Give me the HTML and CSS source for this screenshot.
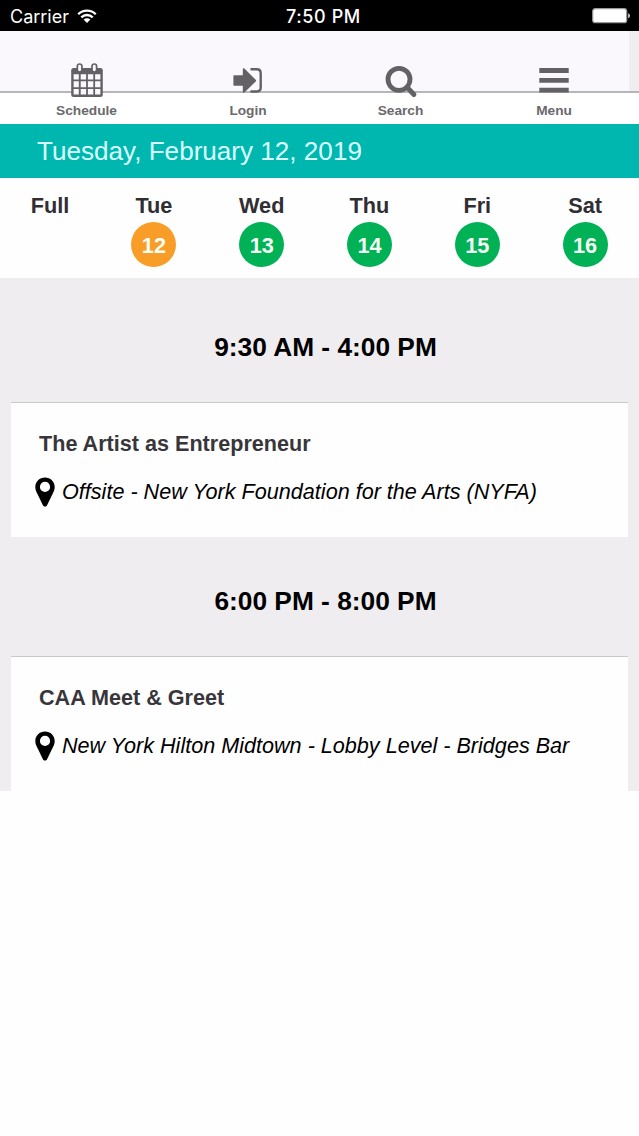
FILE: index.html
```html
<!DOCTYPE html>
<html lang="en">
<head>
  <meta charset="utf-8">
  <title>Schedule</title>
  <link rel="stylesheet" href="styles.css">
</head>
<body>
  <div class="status-bar">
    <div class="carrier">
      <span>Carrier</span>
      <svg class="wifi" width="20" height="14" viewBox="0 0 20 14">
        <path d="M1.2 5.2a12.6 12.6 0 0 1 17.6 0M4.3 8.3a8.2 8.2 0 0 1 11.4 0" fill="none" stroke="#fff" stroke-width="2.3"/>
        <path d="M10 14L6.6 10.6a4.9 4.9 0 0 1 6.8 0z" fill="#fff"/>
      </svg>
    </div>
    <div class="clock">7:50 PM</div>
    <svg class="battery" width="40" height="16" viewBox="0 0 40 16">
      <rect x=".7" y=".7" width="34" height="14" rx="2.5" fill="#fff" stroke="#999" stroke-width="1.2"/>
      <path d="M36.3 5.3c2 .8 2 4.2 0 5z" fill="#fff"/>
    </svg>
  </div>

  <nav class="tabs">
    <a class="tab">
      <svg width="34" height="36" viewBox="0 0 34 36">
        <rect x="1.2" y="6" width="31.6" height="29" rx="2.5" fill="#636164"/>
        <path d="M3.6 12.3h5.2v5.2H3.6zm7.1 0h5.4v5.2h-5.4zm7.2 0h5.4v5.2h-5.4zm7.2 0h5.3v5.2h-5.3zM3.6 19.2h5.2v6H3.6zm7.1 0h5.4v6h-5.4zm7.2 0h5.4v6h-5.4zm7.2 0h5.3v6h-5.3zM3.6 26.9h5.2v5.6H3.6zm7.1 0h5.4v5.6h-5.4zm7.2 0h5.4v5.6h-5.4zm7.2 0h5.3v5.6h-5.3z" fill="#faf8fc"/>
        <rect x="7.3" y="2" width="4.6" height="8" rx="2.3" fill="#faf8fc" stroke="#636164" stroke-width="1.7"/>
        <rect x="22" y="2" width="4.6" height="8" rx="2.3" fill="#faf8fc" stroke="#636164" stroke-width="1.7"/>
      </svg>
      <span>Schedule</span>
    </a>
    <a class="tab">
      <svg width="34" height="36" viewBox="0 0 34 36">
        <path d="M3.4 13.2h8.400V7.200c0-1 .9-1.300 1.600-.6l11.300 11.100c.6.6.6 1.200 0 1.800L13.400 30.400c-.7.7-1.600.4-1.600-.6v-6H3.400c-.6 0-1-.4-1-1v-8.600c0-.6.4-1 1-1z" fill="#636164"/>
        <path d="M19.500 7.300h6.300c2.600 0 3.900 1.300 3.900 3.900v14.400c0 2.600-1.300 3.900-3.900 3.900h-6.300" fill="none" stroke="#636164" stroke-width="2.400"/>
      </svg>
      <span>Login</span>
    </a>
    <a class="tab">
      <svg width="34" height="36" viewBox="0 0 34 36">
        <circle cx="15" cy="17.300" r="11" fill="none" stroke="#636164" stroke-width="4.800"/>
        <path d="M23.500 25.800l6.400 6.600" stroke="#636164" stroke-width="5" stroke-linecap="round"/>
      </svg>
      <span>Search</span>
    </a>
    <a class="tab">
      <svg width="34" height="36" viewBox="0 0 34 36">
        <path d="M2.300 6h29.400v4.900H2.300zM2.300 15.900h29.400v4.900H2.300zM2.300 25.700h29.400v4.900H2.300z" fill="#636164"/>
      </svg>
      <span>Menu</span>
    </a>
  </nav>

  <header class="date-bar">Tuesday, February 12, 2019</header>

  <div class="days">
    <div class="day"><span>Full</span></div>
    <div class="day active"><span>Tue</span><b>12</b></div>
    <div class="day"><span>Wed</span><b>13</b></div>
    <div class="day"><span>Thu</span><b>14</b></div>
    <div class="day"><span>Fri</span><b>15</b></div>
    <div class="day"><span>Sat</span><b>16</b></div>
  </div>

  <main class="schedule">
    <h2>9:30 AM - 4:00 PM</h2>
    <div class="event">
      <h3>The Artist as Entrepreneur</h3>
      <p>
        <svg class="pin" width="20" height="30" viewBox="0 0 20 30">
          <path d="M10 .5C4.500.5.300 4.700.300 10c0 3.300 1.300 5.500 2.900 8.400l4.600 9.600c.9 2 3.500 2 4.400 0l4.600-9.600c1.600-2.900 2.900-5.100 2.900-8.400C19.700 4.700 15.500.5 10 .5zm0 4.300a5.100 5.100 0 1 1 0 10.200 5.100 5.100 0 0 1 0-10.200z"/>
        </svg>
        <em>Offsite - New York Foundation for the Arts (NYFA)</em>
      </p>
    </div>
    <h2>6:00 PM - 8:00 PM</h2>
    <div class="event">
      <h3>CAA Meet &amp; Greet</h3>
      <p>
        <svg class="pin" width="20" height="30" viewBox="0 0 20 30">
          <path d="M10 .5C4.500.5.300 4.700.300 10c0 3.300 1.300 5.500 2.900 8.400l4.600 9.600c.9 2 3.500 2 4.400 0l4.600-9.600c1.600-2.900 2.900-5.100 2.900-8.400C19.700 4.700 15.500.5 10 .5zm0 4.300a5.100 5.100 0 1 1 0 10.200 5.100 5.100 0 0 1 0-10.200z"/>
        </svg>
        <em>New York Hilton Midtown - Lobby Level - Bridges Bar</em>
      </p>
    </div>
  </main>
</body>
</html>
```
FILE: styles.css
```css
* {
  box-sizing: border-box;
}

body {
  margin: 0;
  background: #fefefe;
  font-family: "Liberation Sans", Arial, sans-serif;
  color: #000;
}

/* phone status bar */
.status-bar {
  display: grid;
  grid-template-columns: 276px auto 1fr;
  align-items: center;
  height: 31px;
  padding: 1px 7px 0 10px;
  background: #000;
  color: #fff;
  font-family: Inter, sans-serif;
  font-size: 18px;
}

.carrier {
  display: flex;
  align-items: center;
  gap: 8px;
}

.clock {
  font-weight: 500;
  letter-spacing: .6px;
}

.battery {
  justify-self: end;
}

/* top tabs */
.tabs {
  display: grid;
  grid-template-columns: 173px 150px 155px 152px;
  height: 93px;
  background:
    linear-gradient(#b7b5b9, #b7b5b9) 0 60px / 100% 2px no-repeat,
    linear-gradient(#efedf0, #efedf0) 100% 0 / 10px 60px no-repeat,
    linear-gradient(#faf8fc 60px, #fff 60px);
}

.tab {
  display: flex;
  flex-direction: column;
  align-items: center;
  padding-top: 31px;
  color: #6b696c;
  font-size: 13.7px;
  font-weight: bold;
}

.tab span {
  margin-top: 5px;
  line-height: 16px;
}

.date-bar {
  height: 54px;
  padding-left: 37px;
  background: #00b7af;
  color: #d9ffff;
  font-size: 26.1px;
  line-height: 54px;
}

.days {
  display: grid;
  grid-template-columns: 100px repeat(5, 107.8px);
  height: 100px;
  padding-top: 15px;
  background: #fefefe;
}

.day {
  display: flex;
  flex-direction: column;
  align-items: center;
  color: #302e33;
  font-size: 21.7px;
  font-weight: bold;
  line-height: 26px;
}

.day b {
  width: 45px;
  height: 45px;
  margin-top: 3px;
  border-radius: 50%;
  background: #00b156;
  color: #f4fff4;
  line-height: 47px;
  text-align: center;
}

.day.active b {
  background: #f99d29;
}

/* sessions */
.schedule {
  height: 513px;
  padding: 5px 11px 0;
  background: #efedf0;
}

.schedule h2 {
  height: 119px;
  margin: 0;
  padding: 9px 0 0 12px;
  font-size: 26.3px;
  line-height: 110px;
  text-align: center;
}

.event {
  height: 135px;
  padding: 27px 24px 0;
  border-top: 1px solid #c9c8cb;
  background: #fefefe;
}

.event h3 {
  margin: 0 0 0 4px;
  color: #38363a;
  font-size: 21.6px;
  line-height: 28px;
}

.event p {
  display: flex;
  align-items: center;
  gap: 7px;
  height: 30px;
  margin: 19px 0 0;
  font-size: 21.6px;
  white-space: nowrap;
}
```
